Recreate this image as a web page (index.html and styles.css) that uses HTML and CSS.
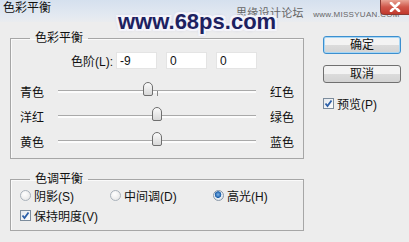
FILE: index.html
```html
<!DOCTYPE html>
<html lang="zh-CN">
<head>
  <meta charset="UTF-8" />
  <title>色彩平衡</title>
  <link rel="stylesheet" href="styles.css">
</head>
<body>
  <div class="dialog">
    <!-- title -->
    <div class="title-bar">
      <div class="title-bar-text">色彩平衡</div>
      <div class="site-mark">思缘设计论坛 <span class="site-url">www.MISSYUAN.COM</span></div>
      <button class="close-btn" aria-label="Close">
        <svg width="12" height="10" viewBox="0 0 12 10"><path d="M2 1 L10 9 M10 1 L2 9" stroke="#fff" stroke-width="2.6" stroke-linecap="round"/></svg>
      </button>
    </div>
    <div class="watermark">www.68ps.com</div>

    <div class="main">
      <div class="left">
        <!-- color balance -->
        <fieldset class="group balance">
          <legend>色彩平衡</legend>
          <div class="levels">
            <label class="levels-label">色阶(L):</label>
            <input class="num" type="text" value="-9">
            <input class="num" type="text" value="0">
            <input class="num" type="text" value="0">
          </div>
          <div class="slider-row">
            <span class="lbl">青色</span>
            <div class="track"><span class="tick"></span><span class="thumb" style="left: 45.5%"></span></div>
            <span class="lbl-end">红色</span>
          </div>
          <div class="slider-row">
            <span class="lbl">洋红</span>
            <div class="track"><span class="tick"></span><span class="thumb" style="left: 50%"></span></div>
            <span class="lbl-end">绿色</span>
          </div>
          <div class="slider-row">
            <span class="lbl">黄色</span>
            <div class="track"><span class="tick"></span><span class="thumb" style="left: 50%"></span></div>
            <span class="lbl-end">蓝色</span>
          </div>
        </fieldset>

        <!-- tone balance -->
        <fieldset class="group tone">
          <legend>色调平衡</legend>
          <div class="radio-row">
            <label class="radio r1"><span class="dot"></span>阴影(S)</label>
            <label class="radio r2"><span class="dot"></span>中间调(D)</label>
            <label class="radio"><span class="dot checked"></span>高光(H)</label>
          </div>
          <label class="check keep"><span class="box"><svg width="9" height="9" viewBox="0 0 9 9"><path d="M1.5 4.5 L3.5 7 L7.5 1.5" fill="none" stroke="#2b5fa8" stroke-width="1.8"/></svg></span>保持明度(V)</label>
        </fieldset>
      </div>

      <div class="right">
        <button class="btn default">确定</button>
        <button class="btn">取消</button>
        <label class="check preview"><span class="box"><svg width="9" height="9" viewBox="0 0 9 9"><path d="M1.5 4.5 L3.5 7 L7.5 1.5" fill="none" stroke="#2b5fa8" stroke-width="1.8"/></svg></span>预览(P)</label>
      </div>
    </div>
  </div>
</body>
</html>
```

FILE: styles.css
```css
body {
  margin: 0;
  padding: 0;
  background: #ededed;
  font-family: "Liberation Sans", "Noto Sans CJK SC", sans-serif;
  font-size: 12px;
  color: #111;
}

.dialog {
  position: relative;
  width: 409px;
  height: 242px;
  overflow: hidden;
}

/* title */
.title-bar {
  position: relative;
  height: 22px;
  background: linear-gradient(to bottom, #d5e0ee, #e3e9f1 70%, #eaecef);
  padding-left: 3px;
}
.title-bar-text {
  line-height: 16px;
}
.site-mark {
  position: absolute;
  left: 236px;
  top: 6px;
  font-size: 11px;
  line-height: 14px;
  color: #666;
  letter-spacing: 0.3px;
}
.site-url {
  font-size: 8px;
  letter-spacing: 0.3px;
  margin-left: 6px;
}
.close-btn {
  position: absolute;
  right: 0;
  top: 0;
  width: 29px;
  height: 15px;
  padding: 0;
  border: 1px solid #8a3a33;
  border-top: none;
  border-right: none;
  border-radius: 0 0 0 4px;
  background: linear-gradient(to bottom, #e9a596, #d0574a 50%, #c1392e);
  display: flex;
  align-items: center;
  justify-content: center;
}

.watermark {
  position: absolute;
  left: 118px;
  top: 10px;
  font-family: "Liberation Sans", sans-serif;
  font-weight: bold;
  font-size: 22px;
  line-height: 24px;
  color: #1d2160;
  text-shadow:
    2px 0 0 #f4f4fa, -2px 0 0 #f4f4fa, 0 2px 0 #f4f4fa, 0 -2px 0 #f4f4fa,
    2px 2px 0 #f4f4fa, -2px -2px 0 #f4f4fa, 2px -2px 0 #f4f4fa, -2px 2px 0 #f4f4fa,
    0 0 4px #9aa0d0;
}

/* layout */
.main {
  display: flex;
  padding: 9px 0 0 10px;
}
.left {
  width: 294px;
}
.right {
  display: flex;
  flex-direction: column;
  margin-left: 19px;
  padding-top: 5px;
}

/* group boxes */
.group {
  margin: 0;
  padding: 0 0 0 9px;
  border: 1px solid #a6a6a6;
  box-shadow: inset 1px 1px 0 #fafafa;
  min-width: 0;
}
.group legend {
  margin-left: 10px;
  padding: 0 5px;
  line-height: 14px;
}

.levels {
  display: flex;
  align-items: center;
  gap: 9px;
  margin-top: 7px;
  margin-bottom: 10px;
  padding-left: 51px;
}
.levels-label {
  margin-right: -6px;
}
.num {
  width: 41px;
  height: 17px;
  box-sizing: border-box;
  border: 1px solid #e4e4e4;
  background: #fff;
  padding: 0 3px;
  font: inherit;
  color: #111;
}

.slider-row {
  display: flex;
  align-items: center;
  height: 25px;
}
.lbl {
  width: 38px;
}
.lbl-end {
  margin-left: 14px;
}
.track {
  position: relative;
  width: 198px;
  height: 2px;
  border-top: 1px solid #a9a9a9;
  background: #fcfcfc;
}
.tick {
  position: absolute;
  left: 50%;
  top: 0;
  width: 1px;
  height: 5px;
  background: #888;
}
.thumb {
  position: absolute;
  top: -9px;
  width: 10px;
  height: 14px;
  margin-left: -5px;
  box-sizing: border-box;
  border: 1px solid #6f6f6f;
  border-radius: 5px 5px 2px 2px;
  background: linear-gradient(to bottom, #fbfbfb, #d8d8d8);
}

.balance {
  padding-bottom: 4px;
}
.tone {
  margin-top: 13px;
  padding-bottom: 7px;
}

.radio-row {
  display: flex;
  align-items: center;
  margin-top: 1px;
  height: 16px;
}
.radio {
  display: flex;
  align-items: center;
  gap: 3px;
}
.r1 {
  width: 90px;
}
.r2 {
  width: 103px;
}
.dot {
  width: 11px;
  height: 11px;
  box-sizing: border-box;
  border-radius: 50%;
  border: 1px solid #a9b2bb;
  background: radial-gradient(circle at 40% 35%, #ffffff, #e2e2e2);
}
.dot.checked {
  background: radial-gradient(circle at 45% 40%, #7fb4e8 0, #1b5faa 3px, #e8eef4 3.6px, #d8dde2);
  border-color: #8a98a8;
}

.check {
  display: flex;
  align-items: center;
  gap: 3px;
}
.keep {
  margin-top: 4px;
  height: 16px;
}
.box {
  width: 11px;
  height: 11px;
  box-sizing: border-box;
  border: 1px solid #7c8c9c;
  background: linear-gradient(to bottom right, #e4e9ee, #fdfdfd);
  display: flex;
  align-items: center;
  justify-content: center;
}

/* buttons */
.btn {
  width: 78px;
  height: 18px;
  padding: 0;
  border: 1px solid #707070;
  border-radius: 3px;
  background: linear-gradient(to bottom, #f3f3f3 50%, #dcdcdc 50%, #d3d3d3);
  font: inherit;
  line-height: 14px;
  color: #111;
}
.btn.default {
  border-color: #3c8fcf;
  box-shadow: inset 0 0 0 1px #a6d6f5;
}
.btn + .btn {
  margin-top: 11px;
}
.preview {
  margin-top: 12px;
}
```
